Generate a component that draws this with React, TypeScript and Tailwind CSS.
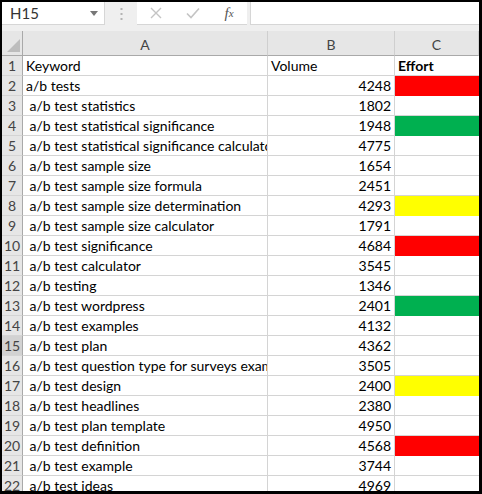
import React from 'react';

type Row = { kw: string; vol?: string; fill?: string };

const rows: Row[] = [
  { kw: 'Keyword', vol: 'Volume' },
  { kw: 'a/b tests', vol: '4248', fill: 'bg-[#ff0000]' },
  { kw: ' a/b test statistics', vol: '1802' },
  { kw: ' a/b test statistical significance', vol: '1948', fill: 'bg-[#00b050]' },
  { kw: ' a/b test statistical significance calculator', vol: '4775' },
  { kw: ' a/b test sample size', vol: '1654' },
  { kw: ' a/b test sample size formula', vol: '2451' },
  { kw: ' a/b test sample size determination', vol: '4293', fill: 'bg-[#ffff00]' },
  { kw: ' a/b test sample size calculator', vol: '1791' },
  { kw: ' a/b test significance', vol: '4684', fill: 'bg-[#ff0000]' },
  { kw: ' a/b test calculator', vol: '3545' },
  { kw: ' a/b testing', vol: '1346' },
  { kw: ' a/b test wordpress', vol: '2401', fill: 'bg-[#00b050]' },
  { kw: ' a/b test examples', vol: '4132' },
  { kw: ' a/b test plan', vol: '4362' },
  { kw: ' a/b test question type for surveys example', vol: '3505' },
  { kw: ' a/b test design', vol: '2400', fill: 'bg-[#ffff00]' },
  { kw: ' a/b test headlines', vol: '2380' },
  { kw: ' a/b test plan template', vol: '4950' },
  { kw: ' a/b test definition', vol: '4568', fill: 'bg-[#ff0000]' },
  { kw: ' a/b test example', vol: '3744' },
  { kw: ' a/b test ideas', vol: '4969' },
];

const font = { fontFamily: 'Lato, "Liberation Sans", sans-serif' };

export default function App() {
  return (
    <div className="w-[482px] h-[494px] bg-black pt-[2px] pl-[2px] pr-[3px] pb-[3px]" style={font}>
      <div className="w-full h-full bg-white overflow-hidden flex flex-col">
        {/* formula bar */}
        <div className="h-[29px] shrink-0 bg-[#efefef] flex items-start">
          <div className="w-[103px] h-[23px] bg-white border-b border-r border-[#d6d6d6] flex items-center pl-[8px] pr-[6px] text-[15px] text-[#333]">
            <span className="flex-1">H15</span>
            <svg width="8" height="5" viewBox="0 0 8 5"><path d="M0 0h8L4 5z" fill="#777" /></svg>
          </div>
          <div className="w-[32px] h-[23px] flex items-center justify-center">
            <svg width="3" height="12" viewBox="0 0 3 12">
              <rect x="0.5" y="0" width="2" height="2" fill="#b3b3b3" />
              <rect x="0.5" y="5" width="2" height="2" fill="#b3b3b3" />
              <rect x="0.5" y="10" width="2" height="2" fill="#b3b3b3" />
            </svg>
          </div>
          <div className="w-[110px] h-[23px] bg-white border-b border-[#d6d6d6] flex items-center">
            <div className="w-[37px] flex justify-center">
              <svg width="12" height="12" viewBox="0 0 12 12"><path d="M1 1l10 10M11 1L1 11" stroke="#c4c4c4" strokeWidth="1.4" /></svg>
            </div>
            <div className="w-[37px] flex justify-center">
              <svg width="14" height="12" viewBox="0 0 14 12"><path d="M1 6.5l4 4L13 1.5" stroke="#c4c4c4" strokeWidth="1.6" fill="none" /></svg>
            </div>
            <div className="w-[36px] flex justify-center text-[15px] italic text-[#555]" style={{ fontFamily: '"Liberation Serif", serif' }}>
              f<span className="text-[11px] relative top-[3px]">x</span>
            </div>
          </div>
          <div className="w-[3px]" />
          <div className="flex-1 h-[23px] bg-white border-b border-l border-[#d6d6d6]" />
        </div>

        {/* grid */}
        <div className="grid grid-cols-[21px_245px_127px_1fr] text-[14px] text-black">
          <div className="h-[25px] bg-[#e6e6e6] border-r border-b border-[#a9a9a9] flex items-end justify-end pr-[2px] pb-[3px]">
            <svg width="13" height="13" viewBox="0 0 13 13"><path d="M13 0V13H0z" fill="#bdbdbd" /></svg>
          </div>
          {['A', 'B', 'C'].map((c) => (
            <div key={c} className="h-[25px] bg-[#e6e6e6] border-r border-b border-r-[#cfcfcf] border-b-[#a9a9a9] flex items-center justify-center pt-[2px] text-[#444]">
              {c}
            </div>
          ))}

          {rows.map((r, i) => (
            <React.Fragment key={i}>
              <div className={`h-[20px] border-r border-b border-r-[#a9a9a9] border-b-[#d4d4d4] flex items-center justify-center text-[#444] ${i + 1 === 15 ? 'bg-[#d2d2d2]' : 'bg-[#e6e6e6]'}`}>
                {i + 1}
              </div>
              <div className="h-[20px] border-r border-b border-[#d4d4d4] flex items-center pl-[3px] overflow-hidden whitespace-pre">
                {r.kw}
              </div>
              <div className={`h-[20px] border-r border-b border-[#d4d4d4] flex items-center px-[3px] overflow-hidden ${i === 0 ? 'justify-start' : 'justify-end'}`}>
                {r.vol}
              </div>
              <div className={`h-[20px] border-b flex items-center pl-[3px] ${r.fill ? `${r.fill} border-transparent` : 'border-[#d4d4d4]'} ${i === 0 ? 'font-bold' : ''}`}>
                {i === 0 ? 'Effort' : ''}
              </div>
            </React.Fragment>
          ))}
        </div>
      </div>
    </div>
  );
}
